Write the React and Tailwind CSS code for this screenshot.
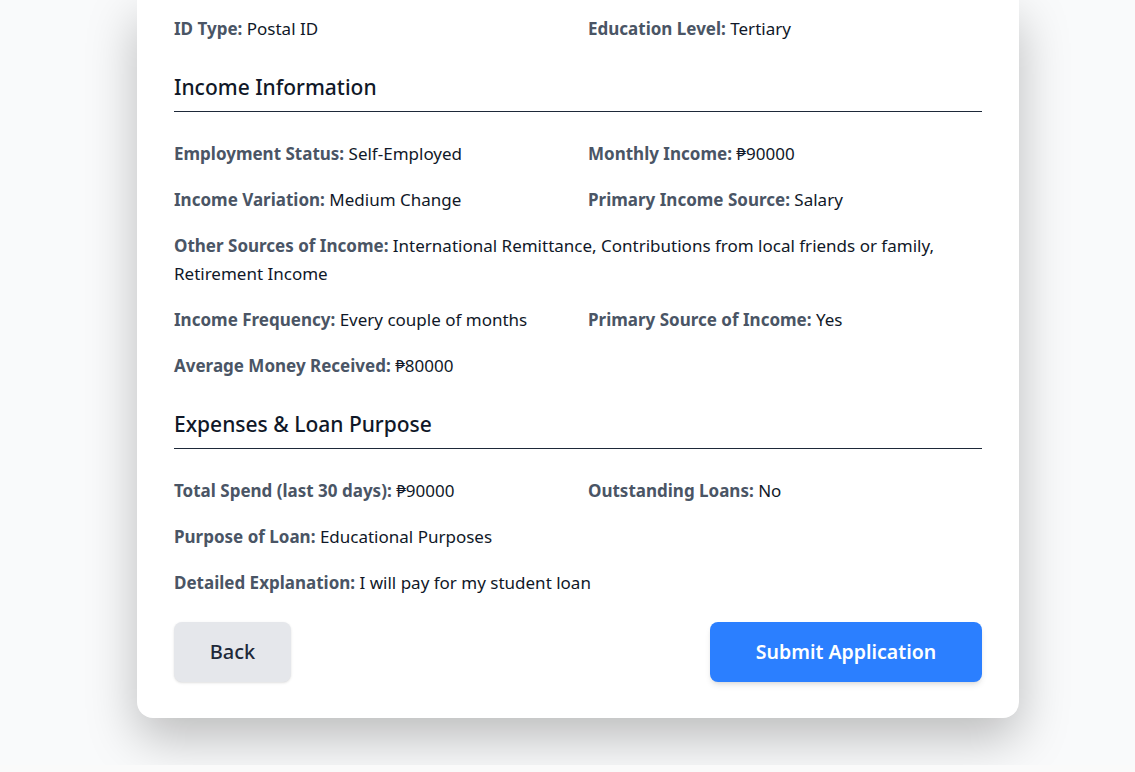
const Field = ({ label, value, full }) => (
  <p className={`leading-7 ${full ? 'col-span-2' : ''}`}>
    <span className="font-bold text-gray-600">{label}:</span>{' '}
    <span className="text-gray-900">{value}</span>
  </p>
);

const Section = ({ title, children }) => (
  <div className="mt-[30px]">
    <h3 className="border-b border-gray-800 pb-[10px] text-[21px] leading-7 font-medium text-gray-900">{title}</h3>
    <div className="mt-[28px] grid grid-cols-2 gap-x-5 gap-y-[18px]">{children}</div>
  </div>
);

export default function App() {
  return (
    <div className="h-[772px] bg-[#fafafa]" style={{ fontFamily: '"Noto Sans", "Open Sans", sans-serif' }}>
      <div className="h-[765px] overflow-hidden bg-gray-50">
        <div className="ml-[137px] w-[882px] rounded-b-2xl bg-white px-[37px] pt-[15px] pb-9 text-[17px] shadow-[0_20px_50px_rgba(0,0,0,0.25)]">
          <div className="grid grid-cols-2 gap-x-5">
            <Field label="ID Type" value="Postal ID" />
            <Field label="Education Level" value="Tertiary" />
          </div>

          <Section title="Income Information">
            <Field label="Employment Status" value="Self-Employed" />
            <Field label="Monthly Income" value="₱90000" />
            <Field label="Income Variation" value="Medium Change" />
            <Field label="Primary Income Source" value="Salary" />
            <Field
              full
              label="Other Sources of Income"
              value="International Remittance, Contributions from local friends or family, Retirement Income"
            />
            <Field label="Income Frequency" value="Every couple of months" />
            <Field label="Primary Source of Income" value="Yes" />
            <Field full label="Average Money Received" value="₱80000" />
          </Section>

          <Section title="Expenses & Loan Purpose">
            <Field label="Total Spend (last 30 days)" value="₱90000" />
            <Field label="Outstanding Loans" value="No" />
            <Field full label="Purpose of Loan" value="Educational Purposes" />
            <Field full label="Detailed Explanation" value="I will pay for my student loan" />
          </Section>

          <div className="mt-[25px] flex items-center justify-between">
            <button className="h-[60px] w-[117px] rounded-lg bg-gray-200 text-xl font-medium text-gray-800 shadow-sm">
              Back
            </button>
            <button className="h-[60px] w-[272px] rounded-lg bg-blue-500 text-[19.5px] font-semibold text-white shadow-md">
              Submit Application
            </button>
          </div>
        </div>
      </div>
    </div>
  );
}
